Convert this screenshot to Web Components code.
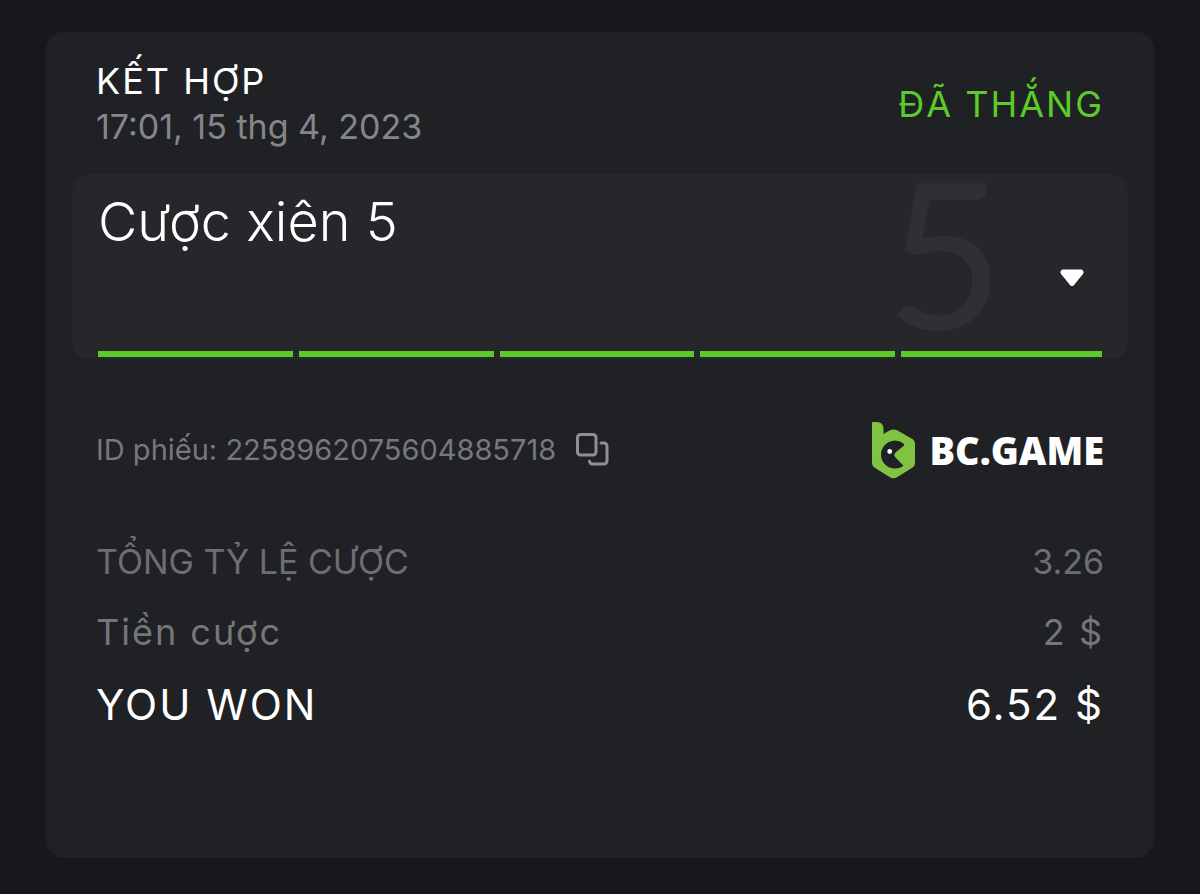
<!DOCTYPE html>
<html lang="vi">
<head>
<meta charset="utf-8">
<meta name="viewport" content="width=device-width, initial-scale=1">
<title>Phiếu cược</title>
<style>
  body {
    margin: 0;
    box-sizing: border-box;
    min-height: 100vh;
    padding: 32px 46px 36px;
    display: flex;
    background: #17181b;
    color: #fff;
    font-family: Inter, "Noto Sans", sans-serif;
  }
</style>
</head>
<body>
<bet-slip>
  <slip-header slot="header">
    <span slot="title">KẾT HỢP</span>
    <time slot="date" datetime="2023-04-15T17:01">17:01, 15 thg 4, 2023</time>
    <span slot="status">ĐÃ THẮNG</span>
  </slip-header>
  <parlay-panel slot="panel" legs="5">Cược xiên 5</parlay-panel>
  <ticket-id slot="meta">2258962075604885718</ticket-id>
  <brand-logo slot="meta"></brand-logo>
  <slip-row><span slot="label">TỔNG TỶ LỆ CƯỢC</span>3.26</slip-row>
  <slip-row kind="stake"><span slot="label">Tiền cược</span>2 $</slip-row>
  <slip-row kind="total"><span slot="label">YOU WON</span>6.52 $</slip-row>
</bet-slip>

<script>
const define = (name, html, setup) => {
  const template = document.createElement('template');
  template.innerHTML = html;
  customElements.define(name, class extends HTMLElement {
    constructor() {
      super();
      this.attachShadow({ mode: 'open' }).append(template.content.cloneNode(true));
    }
    connectedCallback() {
      if (setup) setup(this, this.shadowRoot);
    }
  });
};

define('bet-slip', `
  <style>
    :host { display: block; flex: 1; box-sizing: border-box; padding: 26px 26px 48px; border-radius: 18px; background: #202124; }
    .meta { display: flex; flex-wrap: wrap; align-items: center; justify-content: space-between; gap: 24px; margin: 62px 24px 60px; }
    .rows { display: flex; flex-direction: column; gap: 24px; margin: 0 24px; }
  </style>
  <slot name="header"></slot>
  <slot name="panel"></slot>
  <div class="meta"><slot name="meta"></slot></div>
  <div class="rows"><slot></slot></div>
`);

define('slip-header', `
  <style>
    :host { display: flex; align-items: center; justify-content: space-between; gap: 24px; margin: 0 24px 24px; font-size: 34px; line-height: 46px; }
    h1 { margin: 0; font: inherit; font-size: 36px; letter-spacing: 2px; }
    .date { color: #858689; }
    .status { color: #5bcb27; font-size: 36px; letter-spacing: 2px; }
  </style>
  <div>
    <h1><slot name="title"></slot></h1>
    <div class="date"><slot name="date"></slot></div>
  </div>
  <div class="status"><slot name="status"></slot></div>
`);

define('parlay-panel', `
  <style>
    :host { display: block; padding: 0 26px 2px; border-radius: 18px; background: #26272a; }
    .main { display: flex; min-height: 177px; }
    h2 { flex: 1; margin: 0; padding-top: 18px; font-size: 54px; line-height: 60px; font-weight: 300; }
    .count { height: 152px; color: #2f3033; font: 400 204px/152px Lato, sans-serif; }
    button { align-self: center; display: flex; margin: 30px 18px 0 56px; padding: 0; border: 0; background: none; color: #fff; cursor: pointer; }
    .legs { display: grid; grid-auto-flow: column; grid-auto-columns: 1fr; }
    .legs i { height: 6px; background: #5bcb27; }
    .legs i:not(:last-child) { margin-right: 6px; }
  </style>
  <div class="main">
    <h2><slot></slot></h2>
    <div class="count"></div>
    <button type="button" aria-label="Mở rộng" aria-expanded="false">
      <svg width="24" height="18" viewBox="0 0 24 18"><path d="M3.2.5h17.6c2.500 0 3.600 2.800 2 4.700l-9 11c-1 1.200-2.600 1.200-3.600 0l-9-11C-.4 3.300.7.5 3.200.5z" fill="currentColor"/></svg>
    </button>
  </div>
  <div class="legs"></div>
`, (host, root) => {
  const legs = Number(host.getAttribute('legs'));
  root.querySelector('.count').textContent = legs;
  root.querySelector('.legs').replaceChildren(
    ...Array.from({ length: legs }, () => document.createElement('i')));
});

define('ticket-id', `
  <style>
    :host { display: flex; align-items: center; gap: 20px; color: #77787b; font-size: 29px; line-height: 40px; }
    button { display: flex; padding: 0; border: 0; background: none; color: #8f9093; cursor: pointer; }
  </style>
  <span>ID phiếu: <slot></slot></span>
  <button type="button" aria-label="Sao chép ID">
    <svg width="33" height="34" viewBox="0 0 33 34" fill="none" stroke="currentColor" stroke-width="3" stroke-linecap="round" stroke-linejoin="round"><rect x="1.500" y="1.500" width="18.500" height="20.500" rx="3"/><path d="M25 10H28a3 3 0 0 1 3 3V28a3 3 0 0 1-3 3H16.500a3 3 0 0 1-3-3"/></svg>
  </button>
`);

define('brand-logo', `
  <style>
    :host { display: block; }
    a { display: flex; align-items: center; gap: 14px; color: #fff; text-decoration: none; font: 800 38px/58px "Open Sans", "Noto Sans", sans-serif; }
  </style>
  <a href="#"><svg width="43" height="58" viewBox="0 0 43 58" aria-hidden="true">
    <path d="M0 2Q0 1 1 1H4.500Q11.500 1 11.500 8V13L17.500 9.600Q21.500 7.400 25.500 9.600L39.500 17.600Q43 19.600 43 23V42Q43 45 40.200 46.700L25 56.300Q21.500 58.300 18 56.300L2.800 46.700Q0 45 0 42Z" fill="#80c342"/>
    <path d="M31.500 22.500A14 14 0 1 0 31.500 44.700L24 37Q20.800 34 24 31L31.500 25Q33 23.700 31.500 22.500Z" fill="#202124"/>
    <circle cx="17.700" cy="30.500" r="2.400" fill="#fff"/>
  </svg><span>BC.GAME</span></a>
`);

define('slip-row', `
  <style>
    :host { display: flex; justify-content: space-between; gap: 24px; color: #6d6e72; font-size: 34px; line-height: 46px; }
    :host([kind]) { letter-spacing: 2px; }
    :host([kind="stake"]) { color: #75767a; font-size: 36px; }
    :host([kind="total"]) { color: #fff; font-size: 42px; line-height: 52px; }
  </style>
  <slot name="label"></slot>
  <span><slot></slot></span>
`);
</script>
</body>
</html>
